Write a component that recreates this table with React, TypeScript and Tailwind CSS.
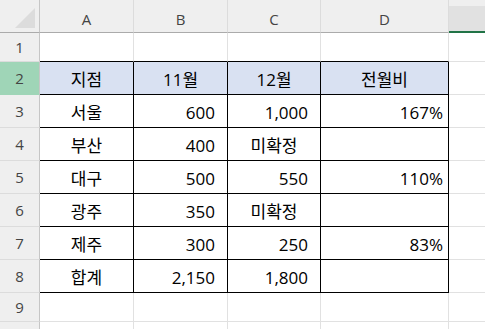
import React from 'react';

const FONT = { fontFamily: '"Open Sans", "Noto Sans CJK KR", sans-serif' };

type Cell = { text?: string; align?: 'num' | 'center' | 'right' };

const rows: { n: number; h: string; cells: Cell[]; head?: boolean }[] = [
  { n: 2, h: 'h-[33px]', head: true, cells: [{ text: '지점', align: 'center' }, { text: '11월', align: 'center' }, { text: '12월', align: 'center' }, { text: '전월비', align: 'center' }] },
  { n: 3, h: 'h-[33px]', cells: [{ text: '서울', align: 'center' }, { text: '600', align: 'num' }, { text: '1,000', align: 'num' }, { text: '167%', align: 'right' }] },
  { n: 4, h: 'h-[33px]', cells: [{ text: '부산', align: 'center' }, { text: '400', align: 'num' }, { text: '미확정', align: 'center' }, {}] },
  { n: 5, h: 'h-[33px]', cells: [{ text: '대구', align: 'center' }, { text: '500', align: 'num' }, { text: '550', align: 'num' }, { text: '110%', align: 'right' }] },
  { n: 6, h: 'h-[33px]', cells: [{ text: '광주', align: 'center' }, { text: '350', align: 'num' }, { text: '미확정', align: 'center' }, {}] },
  { n: 7, h: 'h-[33px]', cells: [{ text: '제주', align: 'center' }, { text: '300', align: 'num' }, { text: '250', align: 'num' }, { text: '83%', align: 'right' }] },
  { n: 8, h: 'h-[33px]', cells: [{ text: '합계', align: 'center' }, { text: '2,150', align: 'num' }, { text: '1,800', align: 'num' }, {}] },
];

const alignCls = {
  num: 'justify-end pr-[12px]',
  center: 'justify-center',
  right: 'justify-end pr-[5px]',
};

function RowHead({ n, h, active }: { n?: number; h: string; active?: boolean }) {
  return (
    <div
      className={`${h} flex items-center justify-center border-r border-b text-[15px] text-[#444] ${
        active ? 'bg-[#9fd5b7] border-r-[#c6c6c6] border-b-[#9fd5b7]' : 'bg-[#efefef] border-r-[#c6c6c6] border-b-[#dcdcdc]'
      }`}
    >
      {n}
    </div>
  );
}

function Plain({ h, bottomBlack, last }: { h: string; bottomBlack?: boolean; last?: boolean }) {
  return (
    <div
      className={`${h} border-b ${last ? '' : 'border-r'} border-r-[#e1e1e1] ${
        bottomBlack ? 'border-b-black' : 'border-b-[#e1e1e1]'
      }`}
    />
  );
}

export default function App() {
  return (
    <div className="h-[329px] w-[485px] overflow-hidden bg-white text-black" style={FONT}>
      <div className="grid grid-cols-[40px_94px_94px_93px_128px_1fr]">
        {/* column headers */}
        <div className="relative h-[33px] border-r border-b border-r-[#c6c6c6] border-b-[#ababab] bg-[#efefef]">
          <svg className="absolute bottom-[4px] right-[4px]" width="20" height="20" viewBox="0 0 20 20">
            <polygon points="20,0 20,20 0,20" fill="#dcdcdc" />
          </svg>
        </div>
        {['A', 'B', 'C', 'D'].map((c) => (
          <div
            key={c}
            className="flex h-[33px] items-center justify-center border-r border-b border-r-[#dcdcdc] border-b-[#ababab] bg-[#efefef] pt-[6px] text-[15px] text-[#444]"
          >
            {c}
          </div>
        ))}
        <div className="h-[33px] bg-[#efefef] pt-[6px]">
          <div className="h-full border-b-2 border-b-[#217346] bg-[#e1e1e1]" />
        </div>

        {/* row 1 */}
        <RowHead n={1} h="h-[29px]" />
        <Plain h="h-[29px]" bottomBlack />
        <Plain h="h-[29px]" bottomBlack />
        <Plain h="h-[29px]" bottomBlack />
        <Plain h="h-[29px]" bottomBlack />
        <Plain h="h-[29px]" last />

        {rows.map((r) => (
          <React.Fragment key={r.n}>
            <RowHead n={r.n} h={r.h} active={r.n === 2} />
            {r.cells.map((c, i) => (
              <div
                key={i}
                className={`${r.h} flex items-center border-r border-b border-black pt-[2px] text-[17px] leading-none ${
                  r.head ? 'bg-[#d9e1f2]' : 'bg-white'
                } ${alignCls[c.align ?? 'center']}`}
              >
                {c.text}
              </div>
            ))}
            <Plain h={r.h} last />
          </React.Fragment>
        ))}

        {/* row 9, 10 */}
        <RowHead n={9} h="h-[29px]" />
        <Plain h="h-[29px]" />
        <Plain h="h-[29px]" />
        <Plain h="h-[29px]" />
        <Plain h="h-[29px]" />
        <Plain h="h-[29px]" last />
        <RowHead h="h-[29px]" />
        <Plain h="h-[29px]" />
        <Plain h="h-[29px]" />
        <Plain h="h-[29px]" />
        <Plain h="h-[29px]" />
        <Plain h="h-[29px]" last />
      </div>
    </div>
  );
}
